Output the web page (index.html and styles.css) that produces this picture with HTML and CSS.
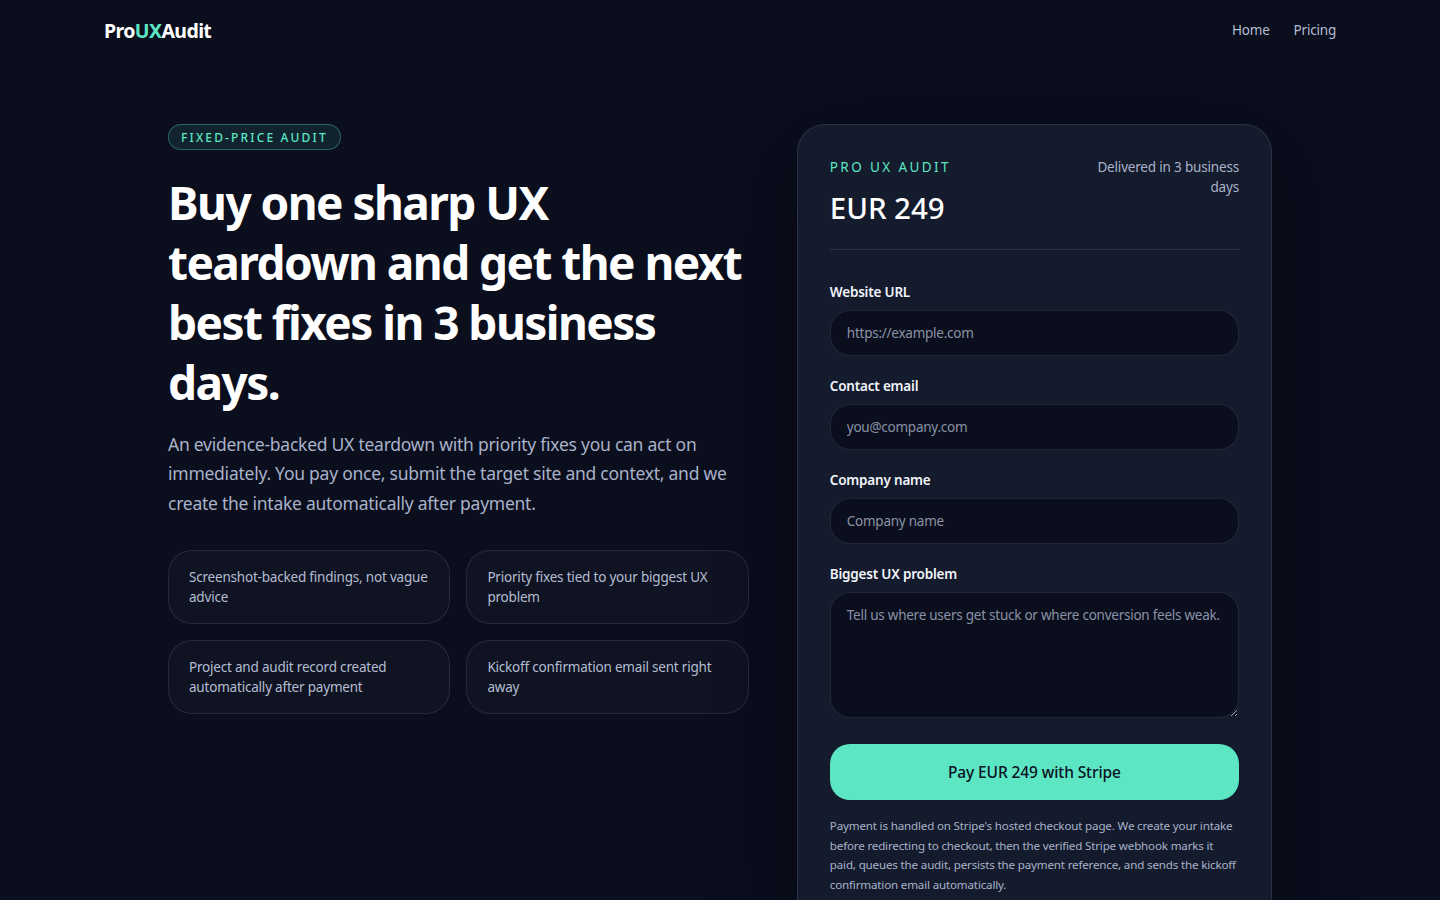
FILE: index.html
```html
<!DOCTYPE html>
<html lang="en">
<head>
<meta charset="utf-8">
<title>ProUXAudit</title>
<link rel="stylesheet" href="styles.css">
</head>
<body>
<header class="nav">
  <a class="logo" href="#">Pro<span class="logo-accent">UX</span>Audit</a>
  <nav class="nav-links"><a href="#">Home</a><a href="#">Pricing</a></nav>
</header>
<main class="main">
  <section class="intro">
    <span class="badge">FIXED-PRICE AUDIT</span>
    <h1 class="title">Buy one sharp UX teardown and get the next best fixes in 3 business days.</h1>
    <p class="lead">An evidence-backed UX teardown with priority fixes you can act on immediately. You pay once, submit the target site and context, and we create the intake automatically after payment.</p>
    <ul class="points">
      <li class="point">Screenshot-backed findings, not vague advice</li>
      <li class="point">Priority fixes tied to your biggest UX problem</li>
      <li class="point">Project and audit record created automatically after payment</li>
      <li class="point">Kickoff confirmation email sent right away</li>
    </ul>
  </section>
  <aside class="card">
    <div class="card-head">
      <div>
        <div class="eyebrow">PRO UX AUDIT</div>
        <div class="price">EUR 249</div>
      </div>
      <div class="delivery">Delivered in 3 business days</div>
    </div>
    <form class="form">
      <label class="field"><span class="field-label">Website URL</span><input class="input" type="text" placeholder="https://example.com"></label>
      <label class="field"><span class="field-label">Contact email</span><input class="input" type="text" placeholder="you@company.com"></label>
      <label class="field"><span class="field-label">Company name</span><input class="input" type="text" placeholder="Company name"></label>
      <label class="field"><span class="field-label">Biggest UX problem</span><textarea class="input textarea" placeholder="Tell us where users get stuck or where conversion feels weak."></textarea></label>
      <button class="pay" type="button">Pay EUR 249 with Stripe</button>
    </form>
    <p class="note">Payment is handled on Stripe's hosted checkout page. We create your intake before redirecting to checkout, then the verified Stripe webhook marks it paid, queues the audit, persists the payment reference, and sends the kickoff confirmation email automatically.</p>
  </aside>
</main>
</body>
</html>
```
FILE: styles.css
```css
* { box-sizing: border-box; }
html, body { margin: 0; padding: 0; }
body {
  background: #0a0e1d;
  color: #fff;
  font-family: "Noto Sans", "Open Sans", sans-serif;
  min-height: 100vh;
}
a { color: inherit; text-decoration: none; }
.nav {
  max-width: 1232px;
  margin: 0 auto;
  height: 61px;
  display: flex;
  align-items: center;
  justify-content: space-between;
}
.logo { font-size: 19.5px; font-weight: 700; letter-spacing: -0.6px; color: #fff; }
.logo-accent { color: #5ce6c4; }
.nav-links { display: flex; gap: 24px; padding-bottom: 2px; font-size: 13.5px; letter-spacing: -0.2px; color: #b4bdd2; }
.main {
  width: 1104px;
  margin: 63px auto 0;
  display: grid;
  grid-template-columns: 1.1fr 0.9fr;
  gap: 48px;
  align-items: start;
}
.badge {
  display: inline-block;
  height: 26px;
  padding: 0 12px;
  border: 1px solid rgba(92, 230, 196, 0.35);
  border-radius: 999px;
  background: rgba(92, 230, 196, 0.1);
  color: #5ce6c4;
  font-size: 12px;
  font-weight: 500;
  line-height: 25px;
  letter-spacing: 2.15px;
}
.title {
  margin: 22px 0 0;
  font-size: 46px;
  line-height: 60px;
  font-weight: 700;
  letter-spacing: -1.55px;
  color: #fff;
}
.lead {
  margin: 18px 0 0;
  font-size: 17.5px;
  line-height: 29.25px;
  letter-spacing: -0.25px;
  color: #a9b2c9;
}
.points {
  list-style: none;
  margin: 32px 0 0;
  padding: 0;
  display: grid;
  grid-template-columns: 1fr 1fr;
  gap: 16px;
}
.point {
  padding: 16px 20px;
  border: 1px solid rgba(255, 255, 255, 0.1);
  border-radius: 24px;
  background: rgba(255, 255, 255, 0.025);
  font-size: 13.5px;
  line-height: 20px;
  letter-spacing: -0.2px;
  color: #b4bdd2;
}
.card {
  padding: 32px;
  border: 1px solid rgba(255, 255, 255, 0.1);
  border-radius: 28px;
  background: #141b2d;
  box-shadow: 0 24px 80px rgba(0, 0, 0, 0.4);
}
.card-head {
  display: flex;
  justify-content: space-between;
  gap: 16px;
  padding-bottom: 23px;
  border-bottom: 1px solid rgba(255, 255, 255, 0.1);
}
.eyebrow { font-size: 13.5px; line-height: 20px; letter-spacing: 2.39px; color: #5ce6c4; }
.price { margin-top: 13px; font-size: 29.5px; line-height: 36px; font-weight: 500; letter-spacing: -0.05px; color: #fff; }
.delivery { font-size: 13.5px; line-height: 20px; letter-spacing: -0.18px; text-align: right; color: #a9b2c9; width: 160px; }
.form { margin-top: 32px; display: flex; flex-direction: column; gap: 20px; }
.field { display: flex; flex-direction: column; gap: 8px; }
.field-label { font-size: 13.5px; line-height: 20px; font-weight: 600; letter-spacing: -0.2px; color: #f1f4fa; }
.input {
  display: block;
  width: 100%;
  height: 46px;
  padding: 0 16px;
  border: 1px solid rgba(255, 255, 255, 0.1);
  border-radius: 20px;
  background: #0a0e1d;
  color: #fff;
  font: 13.5px/20px "Noto Sans", sans-serif;
  letter-spacing: -0.25px;
  outline: none;
}
.input::placeholder { color: #8a92a6; opacity: 1; }
.textarea { height: 126px; padding: 12px 16px; resize: vertical; }
.pay {
  height: 56px;
  margin-top: 6px;
  border: 0;
  border-radius: 20px;
  background: #5ce6c4;
  color: #0b1222;
  font: 500 15.5px "Noto Sans", sans-serif;
  letter-spacing: -0.1px;
}
.note { margin: 16px 0 0; font-size: 11.6px; line-height: 19.5px; letter-spacing: -0.17px; color: #a9b2c9; }
```
